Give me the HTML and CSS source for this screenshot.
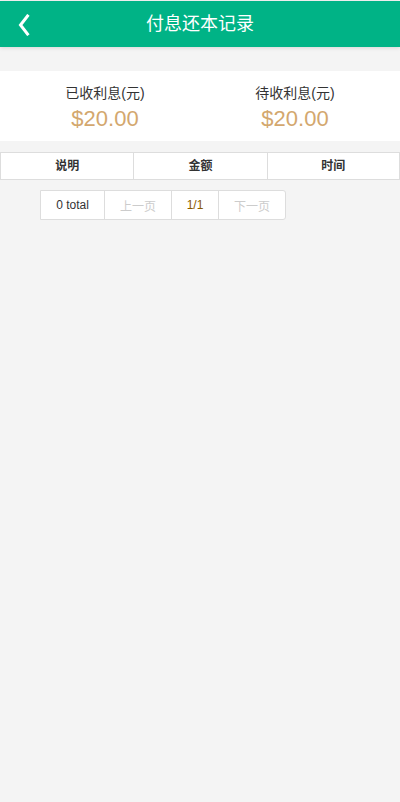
FILE: index.html
```html
<!DOCTYPE html>
<html lang="zh-CN">
<head>
<meta charset="utf-8">
<meta name="viewport" content="width=device-width, initial-scale=1">
<title>付息还本记录</title>
<link rel="stylesheet" href="styles.css">
</head>
<body>
<header class="topbar">
  <a class="back" href="#" aria-label="返回">
    <svg width="12" height="22" viewBox="0 0 12 22"><path d="M9.5 2 L2.5 11 L9.5 20" fill="none" stroke="#fff" stroke-width="3" stroke-linecap="square" stroke-linejoin="miter"/></svg>
  </a>
  <h1 class="title">付息还本记录</h1>
</header>

<section class="summary">
  <div class="stat">
    <div class="stat-label">已收利息(元)</div>
    <div class="stat-value">$20.00</div>
  </div>
  <div class="stat">
    <div class="stat-label">待收利息(元)</div>
    <div class="stat-value">$20.00</div>
  </div>
</section>

<div class="table-head">
  <div class="th">说明</div>
  <div class="th">金额</div>
  <div class="th">时间</div>
</div>

<nav class="pager">
  <span class="pg pg-total">0 total</span>
  <span class="pg pg-prev pg-disabled">上一页</span>
  <span class="pg pg-cur">1/1</span>
  <span class="pg pg-next pg-disabled">下一页</span>
</nav>
</body>
</html>
```

FILE: styles.css
```css
html, body {
  margin: 0;
  padding: 0;
}
body {
  background: #f4f4f4;
  font-family: "Liberation Sans", Arial, "Noto Sans CJK SC", sans-serif;
  color: #333;
  min-height: 802px;
  padding-top: 1px;
  box-sizing: border-box;
}
.topbar {
  height: 46px;
  background: #00b386;
  display: flex;
  align-items: center;
  justify-content: center;
  position: relative;
  box-shadow: 0 1px 4px rgba(0,0,0,0.12);
}
.back {
  position: absolute;
  left: 18px;
  top: 13px;
  width: 12px;
  height: 22px;
  display: block;
}
.back svg { display: block; }
.title {
  margin: 0;
  font-size: 18px;
  font-weight: normal;
  color: #fff;
  line-height: 46px;
}
.summary {
  margin-top: 24px;
  background: #fff;
  height: 70px;
  padding: 0 10px;
  display: flex;
}
.stat {
  flex: 1;
  display: flex;
  flex-direction: column;
  align-items: center;
  padding-top: 13px;
}
.stat-label {
  font-size: 14px;
  line-height: 18px;
  color: #333;
}
.stat-value {
  font-size: 22px;
  line-height: 34px;
  color: #d3a76e;
}
.table-head {
  margin-top: 11px;
  display: grid;
  grid-template-columns: 1fr 1fr 1fr;
  background: #fff;
  border-top: 1px solid #ddd;
  border-bottom: 1px solid #ddd;
}
.th {
  height: 26px;
  line-height: 26px;
  text-align: center;
  font-size: 12px;
  font-weight: bold;
  color: #333;
  border-left: 1px solid #ddd;
}
.th:last-child { border-right: 1px solid #ddd; }
.pager {
  margin: 10px 0 0 40px;
  display: inline-flex;
  background: #fff;
  border: 1px solid #ddd;
  border-radius: 0 3px 3px 0;
  height: 28px;
}
.pg {
  display: flex;
  align-items: center;
  justify-content: center;
  font-size: 12px;
  color: #333;
  border-left: 1px solid #ddd;
}
.pg:first-child { border-left: none; }
.pg-total { width: 63px; }
.pg-prev { width: 66px; }
.pg-cur { width: 46px; color: #8a5a00; }
.pg-next { width: 66px; }
.pg-disabled { color: #ccc; }
```
